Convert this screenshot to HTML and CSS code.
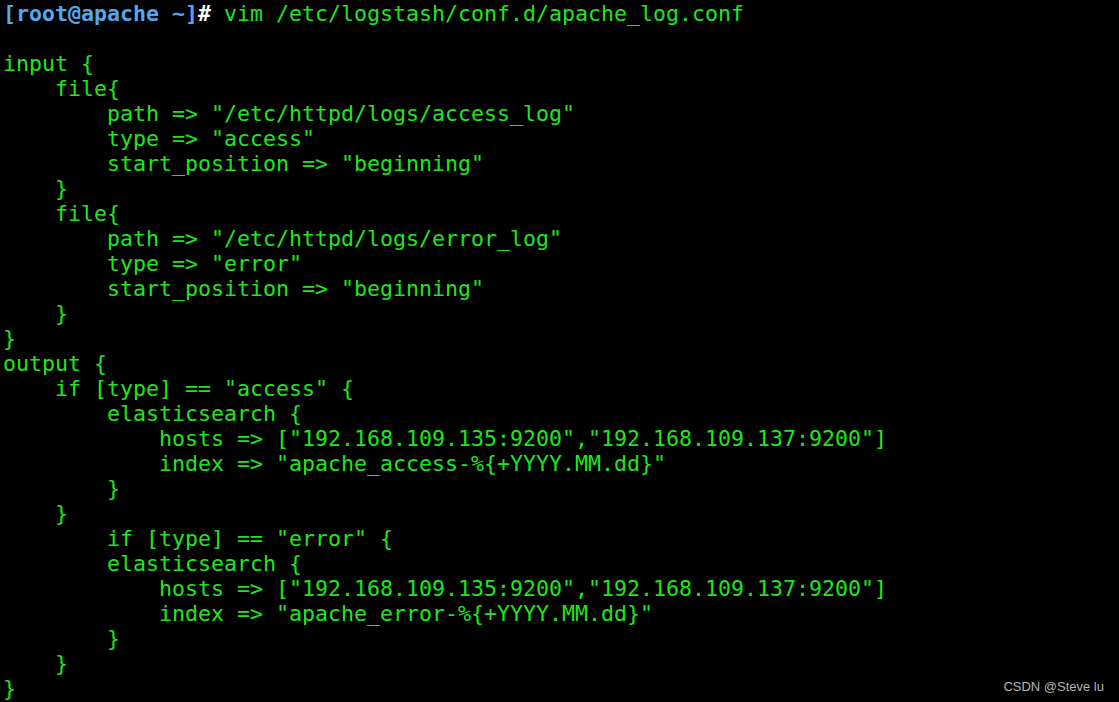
FILE: index.html
```html
<!DOCTYPE html>
<html>
<head>
<meta charset="utf-8">
<link rel="stylesheet" href="styles.css">
</head>
<body>
<div class="terminal">
<pre class="screen"><span class="prompt">[root@apache ~]</span><span class="hash">#</span> vim /etc/logstash/conf.d/apache_log.conf

input {
    file{
        path =&gt; "/etc/httpd/logs/access_log"
        type =&gt; "access"
        start_position =&gt; "beginning"
    }
    file{
        path =&gt; "/etc/httpd/logs/error_log"
        type =&gt; "error"
        start_position =&gt; "beginning"
    }
}
output {
    if [type] == "access" {
        elasticsearch {
            hosts =&gt; ["192.168.109.135:9200","192.168.109.137:9200"]
            index =&gt; "apache_access-%{+YYYY.MM.dd}"
        }
    }
        if [type] == "error" {
        elasticsearch {
            hosts =&gt; ["192.168.109.135:9200","192.168.109.137:9200"]
            index =&gt; "apache_error-%{+YYYY.MM.dd}"
        }
    }
}</pre>
<div class="watermark">CSDN @Steve lu</div>
</div>
</body>
</html>
```

FILE: styles.css
```css
html, body {
  margin: 0;
  padding: 0;
  background: #000;
  width: 1119px;
  height: 702px;
  overflow: hidden;
}
.terminal {
  position: relative;
  width: 1119px;
  height: 702px;
  background: #000;
}
.screen {
  margin: 0;
  padding: 1px 0 0 3px;
  font-family: "DejaVu Sans Mono", monospace;
  font-size: 21.6px;
  line-height: 25px;
  color: #1ee61e;
  white-space: pre;
}
.prompt {
  color: #52a9f0;
  font-weight: bold;
}
.hash {
  color: #ffffff;
  font-weight: bold;
}
.watermark {
  position: absolute;
  right: 15px;
  bottom: 8px;
  font-family: "Liberation Sans", Arial, sans-serif;
  font-size: 13px;
  color: #b4b4b4;
}
```
